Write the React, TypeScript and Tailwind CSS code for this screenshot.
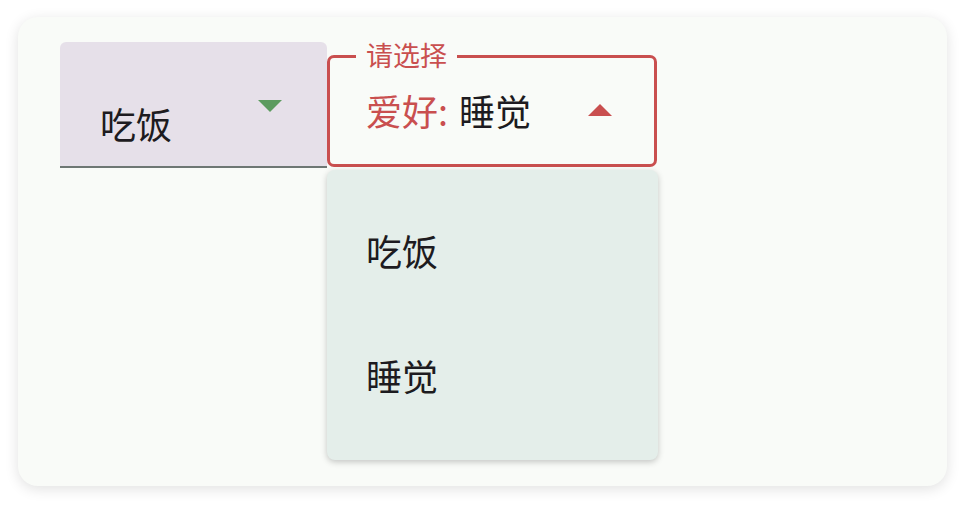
import React from "react";

const font = { fontFamily: '"Noto Sans CJK SC", "Noto Sans", sans-serif' };

const Caret: React.FC<{ up?: boolean; color: string }> = ({ up, color }) => (
  <svg width="24" height="12" viewBox="0 0 24 12">
    <polygon points={up ? "12,0 24,12 0,12" : "0,0 24,0 12,12"} fill={color} />
  </svg>
);

export default function App() {
  const options = ["吃饭", "睡觉"];

  return (
    <div className="min-h-[505px] bg-white px-[18px] pt-[17px]" style={font}>
      <div className="h-[469px] w-[929px] rounded-[20px] bg-[#f9fbf8] pl-[42px] pt-[25px] shadow-[0_3px_14px_rgba(0,0,0,0.12)]">
        <div className="flex items-start">
          {/* filled select */}
          <div className="relative h-[126px] w-[267px] rounded-t-[6px] border-b-2 border-[#6e7774] bg-[#e6e0e9] pl-[40px] pt-[63px]">
            <span className="block text-[36px] leading-[36px] text-[#1d1b20]">吃饭</span>
            <div className="absolute right-[45px] top-[58px] flex">
              <Caret color="#5c9b5f" />
            </div>
          </div>

          {/* outlined select, open */}
          <div className="relative mt-[13px]">
            <div className="relative h-[112px] w-[330px] rounded-[7px] border-[3px] border-[#c94f4f] pl-[36px] pt-[34px]">
              <span className="absolute left-[26px] top-[-20px] bg-[#f9fbf8] px-[10px] text-[27px] leading-[34px] text-[#c94f4f]">
                请选择
              </span>
              <span className="block text-[36px] leading-[36px]">
                <span className="text-[#c94f4f]">爱好:</span>
                <span className="ml-[11px] text-[#1d1b20]">睡觉</span>
              </span>
              <div className="absolute right-[42px] top-[46px] flex">
                <Caret up color="#c94f4f" />
              </div>
            </div>

            <div className="absolute left-0 top-[115px] h-[290px] w-[331px] rounded-[8px] bg-[#e4eeea] pt-[17px] shadow-[0_2px_6px_rgba(0,0,0,0.22)]">
              {options.map((o) => (
                <div key={o} className="flex h-[125px] items-center pl-[39px] text-[36px] leading-[36px] text-[#1d1b20]">
                  {o}
                </div>
              ))}
            </div>
          </div>
        </div>
      </div>
    </div>
  );
}
